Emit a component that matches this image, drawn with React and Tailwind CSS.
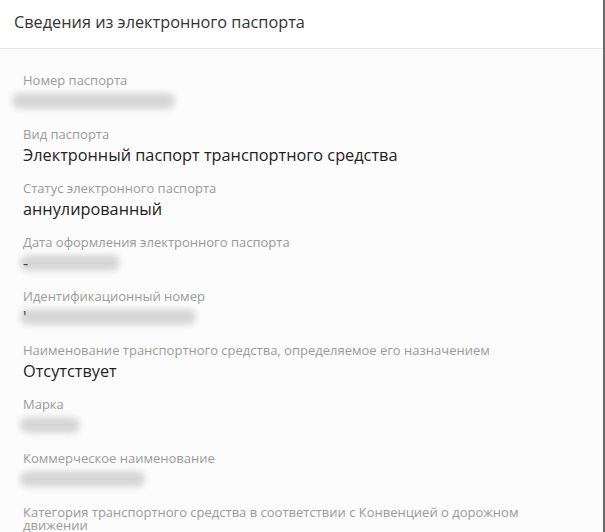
const fields = [
  { label: 'Номер паспорта', blur: { x: 12, w: 163 } },
  { label: 'Вид паспорта', value: 'Электронный паспорт транспортного средства' },
  { label: 'Статус электронного паспорта', value: 'аннулированный' },
  { label: 'Дата оформления электронного паспорта', blur: { x: 20, w: 100 }, mark: '-' },
  { label: 'Идентификационный номер', blur: { x: 20, w: 176 }, mark: '\'' },
  { label: 'Наименование транспортного средства, определяемое его назначением', value: 'Отсутствует' },
  { label: 'Марка', blur: { x: 20, w: 60 } },
  { label: 'Коммерческое наименование', blur: { x: 20, w: 125 } },
  { label: 'Категория транспортного средства в соответствии с Конвенцией о дорожном движении' },
];

// blurred placeholder for hidden values
function Redacted({ x, w, mark }) {
  return (
    <div className="relative h-[22px]">
      <div
        className="absolute top-[3px] h-[16px] rounded-full bg-[#d6d6d6] blur-[3px]"
        style={{ left: x - 23, width: w }}
      />
      {mark && <span className="absolute left-0 top-0 text-[16px] leading-[22px] text-[#444]">{mark}</span>}
    </div>
  );
}

export default function App() {
  return (
    <div className="h-[532px] w-[605px] overflow-hidden border-r-2 border-[#6b6b6b] bg-[#fcfcfc] font-['Open_Sans',sans-serif]">
      <div className="flex h-[49px] items-center border-b border-[#e6e6e6] bg-white pl-[14px] pb-[3px]">
        <h1 className="text-[16.3px] text-[#333]">Сведения из электронного паспорта</h1>
      </div>
      <div className="flex flex-col gap-[16px] pl-[23px] pr-[70px] pt-[25px]">
        {fields.map((f) => (
          <div key={f.label}>
            <div className="text-[13px] leading-[13px] text-[#9a9a9a]">{f.label}</div>
            {f.value && <div className="mt-[3px] text-[16.3px] leading-[22px] text-[#222]">{f.value}</div>}
            {f.blur && <div className="mt-[3px]"><Redacted x={f.blur.x} w={f.blur.w} mark={f.mark} /></div>}
          </div>
        ))}
      </div>
    </div>
  );
}
